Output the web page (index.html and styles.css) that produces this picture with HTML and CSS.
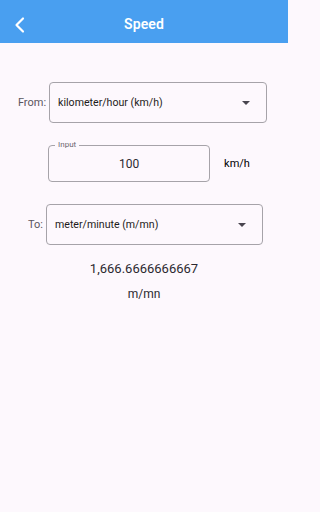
FILE: index.html
```html
<!DOCTYPE html>
<html>
<head>
<meta charset="utf-8">
<link rel="stylesheet" href="styles.css">
</head>
<body>
<header class="appbar">
  <svg class="back" width="24" height="24" viewBox="0 0 24 24"><polyline points="13,5.5 6.5,12 13,18.5" fill="none" stroke="#fff" stroke-width="2.2" stroke-linecap="round" stroke-linejoin="round"/></svg>
  <h1 class="title">Speed</h1>
</header>
<main class="content">
  <div class="row row-from">
    <span class="label">From:</span>
    <div class="select select-from">
      <span class="select-text">kilometer/hour (km/h)</span>
      <span class="caret"></span>
    </div>
  </div>
  <div class="row row-input">
    <div class="field">
      <span class="field-label">Input</span>
      <span class="field-value">100</span>
    </div>
    <span class="unit-side">km/h</span>
  </div>
  <div class="row row-to">
    <span class="label">To:</span>
    <div class="select select-to">
      <span class="select-text">meter/minute (m/mn)</span>
      <span class="caret"></span>
    </div>
  </div>
  <div class="result">1,666.6666666667</div>
  <div class="result-unit">m/mn</div>
</main>
</body>
</html>
```

FILE: styles.css
```css
* { box-sizing: border-box; }
html, body { margin: 0; padding: 0; background: #fdf8fd; }
body {
  width: 288px;
  height: 512px;
  font-family: Roboto, "Noto Sans", sans-serif;
  color: #1d1b20;
  overflow: hidden;
}
.appbar {
  height: 43px;
  background: #499ff0;
  display: flex;
  align-items: center;
  justify-content: center;
  position: relative;
  padding-top: 4px;
}
.back {
  position: absolute;
  left: 10px;
  top: 13px;
}
.title {
  margin: 0;
  color: #fff;
  font-size: 14px;
  font-weight: 600;
  letter-spacing: 0.1px;
}
.content {
  display: flex;
  flex-direction: column;
  align-items: stretch;
}
.row {
  display: flex;
  align-items: center;
  justify-content: center;
}
.row-from { margin-top: 39px; padding-right: 3px; }
.row-input { margin-top: 22px; padding-left: 10px; }
.row-to { margin-top: 22px; padding-left: 3px; }
.label {
  font-size: 11px;
  color: #5a565e;
  margin-right: 3px;
}
.select {
  height: 41px;
  border: 1px solid #a6a3a9;
  border-radius: 4px;
  display: flex;
  align-items: center;
  padding: 0 16px 0 8px;
  justify-content: space-between;
}
.select-from { width: 218px; }
.select-to { width: 217px; }
.select-text {
  font-size: 10.6px;
  color: #1d1b20;
}
.caret {
  width: 0;
  height: 0;
  border-left: 4px solid transparent;
  border-right: 4px solid transparent;
  border-top: 4px solid #49454f;
}
.field {
  position: relative;
  width: 162px;
  height: 37px;
  border: 1px solid #a6a3a9;
  border-radius: 4px;
  display: flex;
  align-items: center;
  justify-content: center;
}
.field-label {
  position: absolute;
  top: -6px;
  left: 6px;
  padding: 0 3px;
  background: #fdf8fd;
  font-size: 8px;
  line-height: 10px;
  color: #6b6770;
}
.field-value {
  font-size: 12px;
  color: #2b2930;
}
.unit-side {
  margin-left: 14px;
  font-size: 11px;
  font-weight: 400;
  color: #000;
}
.result {
  margin-top: 16px;
  text-align: center;
  font-size: 13px;
  color: #2b2930;
}
.result-unit {
  margin-top: 11px;
  text-align: center;
  font-size: 12px;
  color: #2b2930;
}
```
